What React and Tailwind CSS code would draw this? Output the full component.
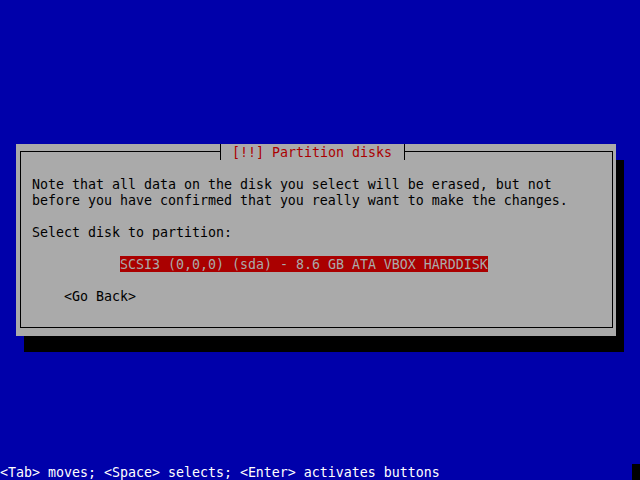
import React from 'react';

const font = "font-['DejaVu_Sans_Mono',monospace] text-[13.29px] tracking-[0px]";

function Line({ children, className = '' }) {
  return <div className={`h-[16px] pt-[2px] leading-[14px] whitespace-pre ${className}`}>{children}</div>;
}

export default function App() {
  return (
    <div className={`w-[640px] h-[480px] bg-[#0000aa] flex flex-col ${font}`}>
      {/* Dialog */}
      <div className="mt-[144px] ml-[16px] w-[600px] h-[192px] bg-[#aaaaaa] shadow-[8px_16px_0_0_#000] flex flex-col">
        {/* Title row */}
        <div className="h-[16px] flex shrink-0">
          <div className="w-[4px]" />
          <div className="w-[200px] h-[9px] mt-[7px] border-l border-t border-black" />
          <div className="w-[1px] h-[16px] bg-black" />
          <div className="w-[183px] pl-[11px]">
            <Line className="text-[#aa0000]">[!!] Partition disks</Line>
          </div>
          <div className="w-[1px] h-[16px] bg-black" />
          <div className="w-[208px] h-[9px] mt-[7px] border-r border-t border-black" />
        </div>

        {/* Frame body */}
        <div className="ml-[4px] mr-[3px] h-[168px] border-l border-r border-b border-black pl-[11px] pt-[16px] text-black">
          <Line>Note that all data on the disk you select will be erased, but not</Line>
          <Line>before you have confirmed that you really want to make the changes.</Line>
          <Line />
          <Line>Select disk to partition:</Line>
          <Line />
          <div className="h-[16px] pl-[88px] flex">
            <Line className="bg-[#aa0000] text-[#aaaaaa]">SCSI3 (0,0,0) (sda) - 8.6 GB ATA VBOX HARDDISK</Line>
          </div>
          <Line />
          <div className="pl-[32px]">
            <Line>&lt;Go Back&gt;</Line>
          </div>
        </div>
      </div>

      {/* Help line */}
      <div className="mt-auto h-[16px] flex text-white">
        <Line>&lt;Tab&gt; moves; &lt;Space&gt; selects; &lt;Enter&gt; activates buttons</Line>
        <div className="ml-auto w-[8px] h-[16px] bg-black" />
      </div>
    </div>
  );
}
